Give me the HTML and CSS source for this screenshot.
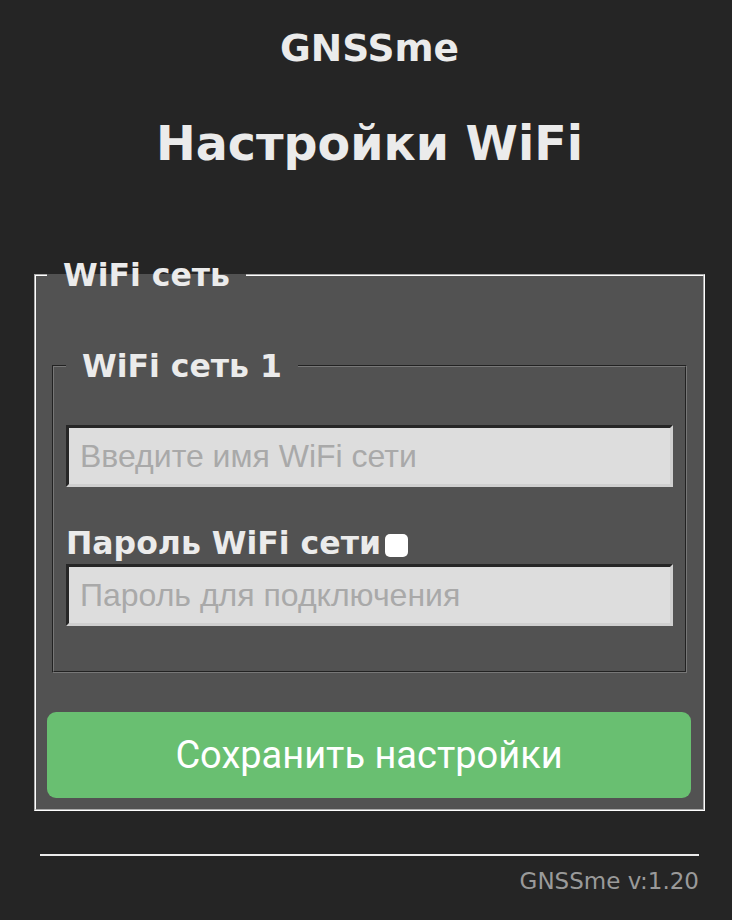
FILE: index.html
```html
<!DOCTYPE html>
<html lang="ru">
<head>
  <meta charset="UTF-8" />
  <meta name="viewport" content="width=device-width, initial-scale=1.0"/>
  <title>Настройки WiFi</title>
  <link rel="stylesheet" href="styles.css">
</head>
<body>
  <div class="container">
    <div class="brand">GNSSme</div>
    <h1>Настройки WiFi</h1>

    <form>
      <fieldset class="outer">
        <legend>WiFi сеть</legend>
        <fieldset class="inner">
          <legend>WiFi сеть 1</legend>
          <input type="text" id="ssid" placeholder="Введите имя WiFi сети">
          <label class="pass-label" for="pass">Пароль WiFi сети<input type="checkbox" class="show"></label>
          <input type="password" id="pass" placeholder="Пароль для подключения">
        </fieldset>
        <button type="button">Сохранить настройки</button>
      </fieldset>
    </form>

    <hr>
    <div class="version">GNSSme v:1.20</div>
  </div>
</body>
</html>
```

FILE: styles.css
```css
body {
  margin: 0;
  background: #252525;
  color: #ebebeb;
  font-family: "DejaVu Sans", Verdana, sans-serif;
}

.container {
  width: 671px;
  margin-left: 34px;
  padding-top: 22px;
}

.brand {
  text-align: center;
  font-size: 37.5px;
  font-weight: bold;
  line-height: 52px;
}

h1 {
  text-align: center;
  font-size: 47.5px;
  margin: 41px 0 87px;
  line-height: 58px;
}

fieldset {
  margin: 0;
  border: 2px groove #fff;
}

legend {
  font-weight: bold;
  font-size: 31.5px;
  padding: 0 16px;
  line-height: 30px;
}

.outer {
  background: #525252;
  padding: 61px 12px 11px 11px;
}

.inner {
  border-color: #777;
  padding: 44px 12px 45px 12px;
  margin: 0 4px 0 5px;
}

input[type=text], input[type=password] {
  display: block;
  box-sizing: border-box;
  width: 100%;
  height: 62px;
  margin: 0;
  padding: 0 11px;
  border: 3px solid;
  border-color: #262626 #cfcfcf #cfcfcf #262626;
  background: #dddddd;
  font-family: "Liberation Sans", Arial, sans-serif;
  font-size: 32px;
}

input::placeholder {
  color: #a9a9a9;
}

.pass-label {
  display: flex;
  align-items: center;
  margin: 36px 0 1px;
  font-weight: bold;
  font-size: 31.5px;
  line-height: 40px;
}

.show {
  appearance: none;
  flex-shrink: 0;
  width: 23px;
  height: 23px;
  margin: 5px 0 0 4px;
  background: #fff;
  border-radius: 5px;
}

button {
  display: block;
  width: 100%;
  height: 86px;
  margin: 39px 0 0;
  border: none;
  border-radius: 9px;
  background: #69bf71;
  color: #fff;
  font-family: Roboto, "Liberation Sans", Arial, sans-serif;
  font-size: 38px;
}

hr {
  margin: 43px 6px 0;
  border: none;
  border-top: 2px solid #ebebeb;
}

.version {
  text-align: right;
  margin: 12px 6px 0;
  color: #9a9a9a;
  font-size: 23px;
}
```
